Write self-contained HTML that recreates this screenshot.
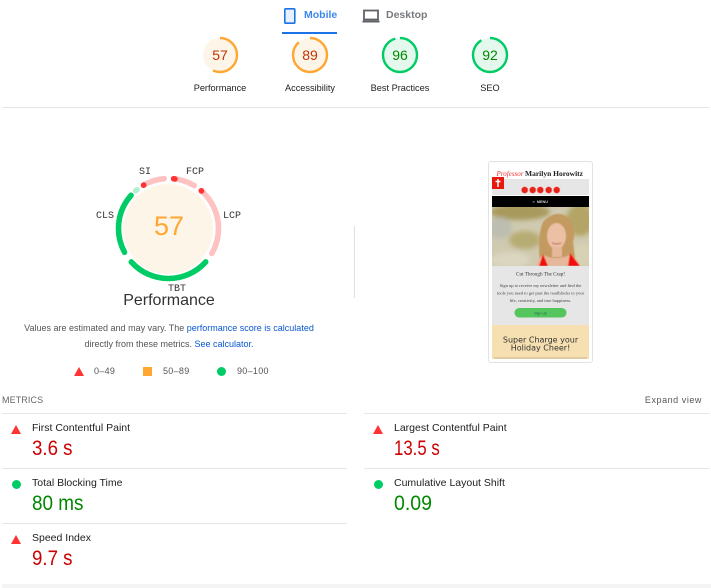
<!DOCTYPE html>
<html><head><meta charset="utf-8"><style>
html,body{margin:0;padding:0;background:#fff}
body{width:711px;height:588px;position:relative;overflow:hidden;font-family:"Liberation Sans",sans-serif;color:#212121}
.a{position:absolute;white-space:nowrap}
.c{transform:translateX(-50%);text-align:center}
.sl{font-size:9.2px;color:#212121;top:83px}
.n{font-size:14px;top:47px}
.h{height:1px;background:#e6e6e6;position:absolute}
.mn{font-size:10.5px;color:#212121}
.mv{font-size:21px;transform-origin:0 0}
.r{color:#c00}.g{color:#080}
.tri{position:absolute;width:0;height:0;border-left:5px solid transparent;border-right:5px solid transparent;border-bottom:9px solid #f33}
.dot{position:absolute;width:9px;height:9px;border-radius:50%;background:#0c6}
.gl{font-family:"Liberation Mono",monospace;font-size:10px;color:#333}
.lg{font-size:9px;color:#555;letter-spacing:.3px;top:366px}
</style></head><body>

<svg class="a" style="left:284px;top:8px" width="12" height="16" viewBox="0 0 12 16"><rect x="0.8" y="0.8" width="10" height="14.400" rx="1" fill="#e8f0fe" stroke="#1a73e8" stroke-width="1.600"/></svg>
<div class="a" style="left:304px;top:9px;font-size:10.5px;font-weight:bold;color:#1a73e8;opacity:.85">Mobile</div>
<div class="a" style="left:282px;top:32px;width:55px;height:2px;background:#1a73e8"></div>
<svg class="a" style="left:362px;top:9px" width="18" height="14" viewBox="0 0 18 14"><rect x="2" y="1.500" width="14" height="9" fill="none" stroke="#5f6368" stroke-width="1.800"/><rect x="0.500" y="11.500" width="17" height="2" fill="#5f6368"/></svg>
<div class="a" style="left:386px;top:9px;font-size:10.5px;font-weight:bold;color:#5f6368;opacity:.85">Desktop</div>

<svg class="a" style="left:0;top:0" width="711" height="110">
<g fill="none" stroke-width="2.400" transform="rotate(-90 220 55)"><circle cx="220" cy="55" r="17" fill="#fef5e9" stroke="none"/><circle cx="220" cy="55" r="17" stroke="#ffa733" pathLength="100" stroke-dasharray="57 100"/></g>
<g fill="none" stroke-width="2.400" transform="rotate(-90 310 55)"><circle cx="310" cy="55" r="17" fill="#fef5e9" stroke="none"/><circle cx="310" cy="55" r="17" stroke="#ffa733" pathLength="100" stroke-dasharray="89 100"/></g>
<g fill="none" stroke-width="2.400" transform="rotate(-90 400 55)"><circle cx="400" cy="55" r="17" fill="#e5f8ee" stroke="none"/><circle cx="400" cy="55" r="17" stroke="#0c6" pathLength="100" stroke-dasharray="96 100"/></g>
<g fill="none" stroke-width="2.400" transform="rotate(-90 490 55)"><circle cx="490" cy="55" r="17" fill="#e5f8ee" stroke="none"/><circle cx="490" cy="55" r="17" stroke="#0c6" pathLength="100" stroke-dasharray="92 100"/></g>
</svg>
<div class="a c n" style="left:220px;color:#c33300">57</div>
<div class="a c n" style="left:310px;color:#c33300">89</div>
<div class="a c n" style="left:400px;color:#080">96</div>
<div class="a c n" style="left:490px;color:#080">92</div>
<div class="a c sl" style="left:220px">Performance</div>
<div class="a c sl" style="left:310px">Accessibility</div>
<div class="a c sl" style="left:400px">Best Practices</div>
<div class="a c sl" style="left:490px">SEO</div>
<div class="h" style="left:2px;top:107px;width:707px"></div>

<svg class="a" style="left:100px;top:160px" width="140" height="140" viewBox="100 160 140 140">
<circle cx="168" cy="229" r="45" fill="#fef5e9"/>
<g fill="none" stroke-width="5.600" stroke-linecap="round" transform="rotate(-90 168.500 228.500)">
<circle cx="168.500" cy="228.500" r="50" pathLength="360" stroke="#ffc2c2" stroke-dasharray="25 360" stroke-dashoffset="-6"/>
<circle cx="168.500" cy="228.500" r="50" pathLength="360" stroke="#ffc2c2" stroke-dasharray="79 360" stroke-dashoffset="-41"/>
<circle cx="168.500" cy="228.500" r="50" pathLength="360" stroke="#0c6" stroke-dasharray="96 360" stroke-dashoffset="-132"/>
<circle cx="168.500" cy="228.500" r="50" pathLength="360" stroke="#0c6" stroke-dasharray="70 360" stroke-dashoffset="-241.600"/>
<circle cx="168.500" cy="228.500" r="50" pathLength="360" stroke="#b3f0d1" stroke-dasharray="2 360" stroke-dashoffset="-319"/>
<circle cx="168.500" cy="228.500" r="50" pathLength="360" stroke="#ffc2c2" stroke-dasharray="25 360" stroke-dashoffset="-330"/>
<circle cx="168.500" cy="228.500" r="50" pathLength="360" stroke="#f33" stroke-dasharray="1.500 360" stroke-dashoffset="-6"/>
<circle cx="168.500" cy="228.500" r="50" pathLength="360" stroke="#f33" stroke-dasharray="0.300 360" stroke-dashoffset="-41"/>
<circle cx="168.500" cy="228.500" r="50" pathLength="360" stroke="#f33" stroke-dasharray="0.300 360" stroke-dashoffset="-330"/>
</g>
</svg>
<div class="a c" style="left:169px;top:211px;font-size:27px;color:#ffa733">57</div>
<div class="a gl" style="left:139px;top:167px">SI</div>
<div class="a gl" style="left:186px;top:167px">FCP</div>
<div class="a gl" style="left:223px;top:211px">LCP</div>
<div class="a gl" style="left:96px;top:211px">CLS</div>
<div class="a gl" style="left:168px;top:284px">TBT</div>
<div class="a c" style="left:169px;top:292px;font-size:16px;color:#333">Performance</div>

<div class="a c" style="left:169px;top:321px;font-size:9px;line-height:15.500px;color:#555">Values are estimated and may vary. The <span style="color:#0b57d0">performance score is calculated</span><br>directly from these metrics. <span style="color:#0b57d0">See calculator.</span></div>

<div class="tri" style="left:74px;top:367px"></div>
<div class="a lg" style="left:94px">0–49</div>
<div class="a" style="left:143px;top:367px;width:9px;height:9px;background:#ffa733"></div>
<div class="a lg" style="left:163px">50–89</div>
<div class="dot" style="left:217px;top:367px"></div>
<div class="a lg" style="left:237px">90–100</div>

<div class="a" style="left:354px;top:226px;width:1px;height:72px;background:#e0e0e0"></div>

<!-- thumbnail -->
<div class="a" style="left:488px;top:161px;width:105px;height:202px;background:#fff;border:1px solid #e2e2e2;border-radius:3px;box-sizing:border-box;overflow:hidden">
<svg width="103" height="200" viewBox="489 162 103 200" style="display:block">
<defs>
<filter id="bl" x="-10%" y="-10%" width="120%" height="120%"><feGaussianBlur stdDeviation="2.500"/></filter>
<filter id="sb" x="-10%" y="-10%" width="120%" height="120%"><feGaussianBlur stdDeviation="0.600"/></filter>
<clipPath id="ph"><rect x="492" y="207" width="97" height="59"/></clipPath>
</defs>
<rect x="492" y="179" width="97" height="5" fill="#e6e6e6"/>
<text x="496.500" y="176" font-family="Liberation Serif,serif" font-size="7" font-style="italic" fill="#e33">Professor</text>
<text x="525" y="176" font-family="Liberation Serif,serif" font-size="7.500" font-weight="bold" fill="#222">Marilyn Horowitz</text>
<rect x="492" y="184" width="97" height="11" fill="#e6e6e6"/>
<rect x="492" y="177" width="12" height="12" fill="#e8180c"/>
<path d="M498 179v8M495.500 181.500h5" stroke="#fff" stroke-width="1.500"/>
<g fill="#e8231a" stroke="#f5a09a" stroke-width=".5"><circle cx="524.700" cy="190" r="3.300"/><circle cx="532.700" cy="190" r="3.300"/><circle cx="540.300" cy="190" r="3.300"/><circle cx="548.700" cy="190" r="3.300"/><circle cx="556.700" cy="190" r="3.300"/></g>
<rect x="492" y="196" width="97" height="11" fill="#000"/>
<text x="532.500" y="203" font-family="Liberation Sans,sans-serif" font-size="3.800" font-weight="bold" fill="#ccc">≡ &#160;MENU</text>
<g clip-path="url(#ph)">
<rect x="492" y="207" width="97" height="59" fill="#cfcab0"/>
<g filter="url(#bl)">
<ellipse cx="520" cy="212" rx="30" ry="8" fill="#a89a5c"/>
<ellipse cx="580" cy="220" rx="14" ry="16" fill="#b3a565"/>
<ellipse cx="500" cy="228" rx="12" ry="11" fill="#bdbdb0"/>
<ellipse cx="525" cy="240" rx="16" ry="9" fill="#b8ac74"/>
<ellipse cx="510" cy="260" rx="20" ry="8" fill="#dbd6c0"/>
<ellipse cx="582" cy="255" rx="10" ry="12" fill="#d8d2b4"/>
</g>
<g filter="url(#sb)">
<path d="M540 262q-3-26 3-40 13-14 26-4 8 12 4 24l3 24h-36z" fill="#c39a5e"/>
<path d="M536 266q2-8 8-11 5 3 12 3 8 0 13-3 8 3 11 11z" fill="#e6b79b"/>
<ellipse cx="556.500" cy="236" rx="9.500" ry="13" fill="#ecc0a4"/>
<path d="M552 247h10v10h-10z" fill="#e6b79b"/>
<path d="M539 266l4-12 5 12zM568 266l2-13 10 13z" fill="#f10f0f"/>
<path d="M552 243q5 2 9 0" stroke="#b5655a" stroke-width="1" fill="none"/>
</g>
</g>
<rect x="492" y="266" width="97" height="59" fill="#e6e6e6"/>
<text x="540.500" y="275.500" text-anchor="middle" font-family="Liberation Serif,serif" font-size="5.200" fill="#333">Cut Through The Crap!</text>
<text x="540.500" y="287" text-anchor="middle" font-family="Liberation Serif,serif" font-size="4.500" fill="#444">Sign up to receive my newsletter and find the</text>
<text x="540.500" y="294.500" text-anchor="middle" font-family="Liberation Serif,serif" font-size="4.500" fill="#444">tools you need to get past the roadblocks to your</text>
<text x="540.500" y="302" text-anchor="middle" font-family="Liberation Serif,serif" font-size="4.500" fill="#444">life, creativity, and true happiness.</text>
<rect x="514.500" y="308" width="52" height="9.500" rx="4.700" fill="#55c55e"/>
<text x="540.500" y="314.500" text-anchor="middle" font-family="Liberation Sans,sans-serif" font-size="3.500" fill="#264">Sign Up</text>
<rect x="492" y="325" width="97" height="34" fill="#f6dfb0"/>
<text x="540.500" y="342.500" text-anchor="middle" font-family="DejaVu Sans,sans-serif" font-size="8" fill="#333">Super Charge your</text>
<text x="540.500" y="350.500" text-anchor="middle" font-family="DejaVu Sans,sans-serif" font-size="8" fill="#333">Holiday Cheer!</text>
<rect x="494" y="357.500" width="93" height="1" fill="#c9b894"/>
</svg>
</div>

<div class="a" style="left:2px;top:395px;font-size:9px;color:#666;letter-spacing:.1px">METRICS</div>
<div class="a" style="right:9px;top:395px;font-size:9px;color:#555;letter-spacing:.55px">Expand view</div>

<div class="h" style="left:2px;top:413px;width:345px"></div>
<div class="h" style="left:364px;top:413px;width:345px"></div>
<div class="h" style="left:2px;top:468px;width:345px"></div>
<div class="h" style="left:364px;top:468px;width:345px"></div>
<div class="h" style="left:2px;top:523px;width:345px"></div>

<div class="tri" style="left:11px;top:425px"></div>
<div class="a mn" style="left:32px;top:422px">First Contentful Paint</div>
<div class="a mv r" style="left:32px;top:437px;transform:scaleX(.89)">3.6 s</div>
<div class="tri" style="left:373px;top:425px"></div>
<div class="a mn" style="left:394px;top:422px">Largest Contentful Paint</div>
<div class="a mv r" style="left:394px;top:437px;transform:scaleX(.8)">13.5 s</div>

<div class="dot" style="left:12px;top:480px"></div>
<div class="a mn" style="left:32px;top:477px">Total Blocking Time</div>
<div class="a mv g" style="left:32px;top:492px;transform:scaleX(.9)">80 ms</div>
<div class="dot" style="left:374px;top:480px"></div>
<div class="a mn" style="left:394px;top:477px">Cumulative Layout Shift</div>
<div class="a mv g" style="left:394px;top:492px;transform:scaleX(.93)">0.09</div>

<div class="tri" style="left:11px;top:535px"></div>
<div class="a mn" style="left:32px;top:532px">Speed Index</div>
<div class="a mv r" style="left:32px;top:547px;transform:scaleX(.89)">9.7 s</div>

<div class="a" style="left:2px;top:584px;width:709px;height:4px;background:#f4f4f4"></div>
</body></html>
